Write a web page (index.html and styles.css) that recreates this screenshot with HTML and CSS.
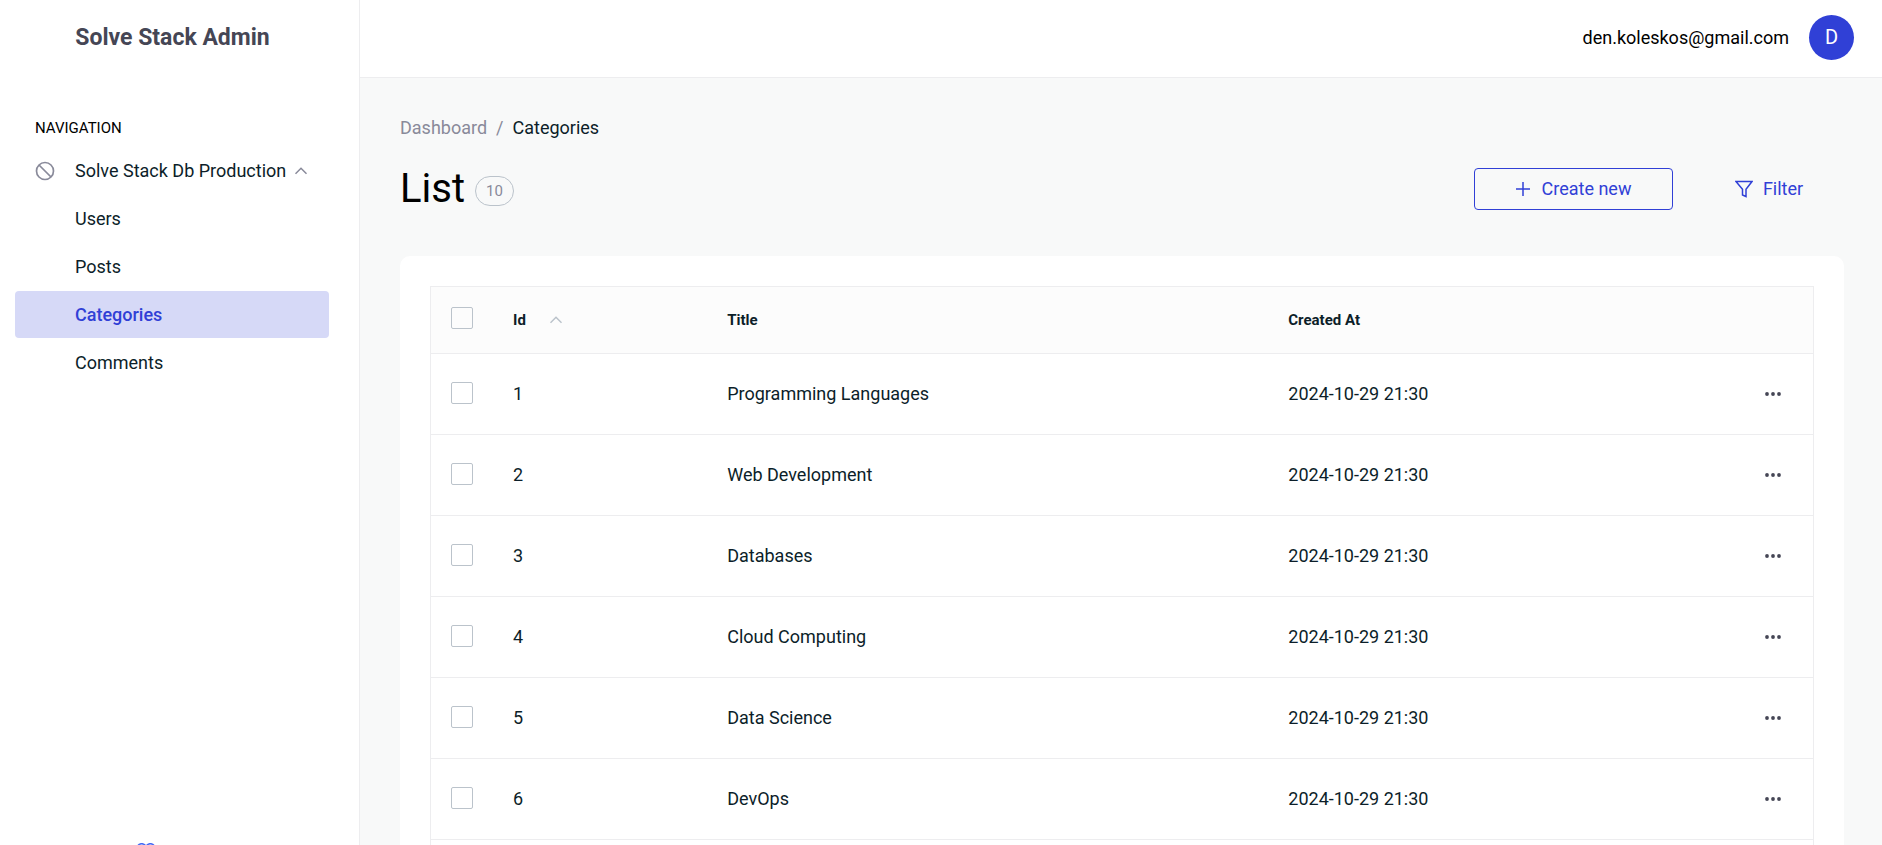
FILE: index.html
```html
<!DOCTYPE html>
<html lang="en">
<head>
<meta charset="utf-8">
<title>Solve Stack Admin</title>
<link rel="stylesheet" href="styles.css">
</head>
<body>
<svg class="sprite" aria-hidden="true">
  <symbol id="chevron-up" viewBox="0 0 14 8"><path d="M1.500 6.700 7 1.200l5.500 5.500" fill="none" stroke="currentColor" stroke-width="1.500"/></symbol>
  <symbol id="dots" viewBox="0 0 16 4"><circle cx="2" cy="2" r="1.900"/><circle cx="8" cy="2" r="1.900"/><circle cx="14" cy="2" r="1.900"/></symbol>
</svg>
<div class="app">
  <aside class="sidebar">
    <a class="brand" href="#">Solve Stack Admin</a>
    <nav class="nav" aria-label="Navigation">
      <div class="nav-title">NAVIGATION</div>
      <button class="nav-group" type="button" aria-expanded="true">
        <svg class="ban" viewBox="0 0 20 20"><circle cx="10" cy="10" r="8.500"/><path d="M4 4l12 12"/></svg>
        <span>Solve Stack Db Production</span>
        <svg class="chevron"><use href="#chevron-up"/></svg>
      </button>
      <a class="nav-item" href="#">Users</a>
      <a class="nav-item" href="#">Posts</a>
      <a class="nav-item active" href="#" aria-current="page">Categories</a>
      <a class="nav-item" href="#">Comments</a>
    </nav>
    <div class="credit">
      <svg class="heart" viewBox="0 0 18 16"><path d="M9 15 2 8C-1 4 1 .7 4.700.700 7 .700 8.200 2 9 3.200 9.800 2 11 .700 13.300.700 17 .700 19 4 16 8z"/></svg>
    </div>
  </aside>
  <div class="page">
    <header class="topbar">
      <span>den.koleskos@gmail.com</span>
      <span class="avatar">D</span>
    </header>
    <main class="main">
      <nav class="crumbs" aria-label="Breadcrumb">
        <a href="#">Dashboard</a><span class="slash">/</span><a class="current" href="#">Categories</a>
      </nav>
      <div class="heading">
        <h1>List</h1>
        <span class="badge">10</span>
        <div class="actions">
          <a class="btn create" href="#">
            <svg class="plus" viewBox="0 0 14 14"><path d="M7 0v14M0 7h14"/></svg>Create new
          </a>
          <button class="btn filter" type="button">
            <svg class="funnel" viewBox="0 0 18 18"><path d="M1 1.500h16L11 9.200V16.500L7.500 15V9.200z"/></svg>Filter
          </button>
        </div>
      </div>
      <section class="card">
        <table class="table">
          <colgroup><col class="c-check"><col class="c-id"><col class="c-title"><col><col class="c-menu"></colgroup>
          <thead>
            <tr>
              <th><input class="check" type="checkbox" aria-label="Select all"></th>
              <th><a class="sort" href="#">Id <svg class="chevron"><use href="#chevron-up"/></svg></a></th>
              <th>Title</th><th>Created At</th><th></th>
            </tr>
          </thead>
          <tbody>
            <tr><td><input class="check" type="checkbox" aria-label="Select 1"></td><td>1</td><td>Programming Languages</td><td>2024-10-29 21:30</td><td><button class="menu" type="button" aria-label="Actions"><svg><use href="#dots"/></svg></button></td></tr>
            <tr><td><input class="check" type="checkbox" aria-label="Select 2"></td><td>2</td><td>Web Development</td><td>2024-10-29 21:30</td><td><button class="menu" type="button" aria-label="Actions"><svg><use href="#dots"/></svg></button></td></tr>
            <tr><td><input class="check" type="checkbox" aria-label="Select 3"></td><td>3</td><td>Databases</td><td>2024-10-29 21:30</td><td><button class="menu" type="button" aria-label="Actions"><svg><use href="#dots"/></svg></button></td></tr>
            <tr><td><input class="check" type="checkbox" aria-label="Select 4"></td><td>4</td><td>Cloud Computing</td><td>2024-10-29 21:30</td><td><button class="menu" type="button" aria-label="Actions"><svg><use href="#dots"/></svg></button></td></tr>
            <tr><td><input class="check" type="checkbox" aria-label="Select 5"></td><td>5</td><td>Data Science</td><td>2024-10-29 21:30</td><td><button class="menu" type="button" aria-label="Actions"><svg><use href="#dots"/></svg></button></td></tr>
            <tr><td><input class="check" type="checkbox" aria-label="Select 6"></td><td>6</td><td>DevOps</td><td>2024-10-29 21:30</td><td><button class="menu" type="button" aria-label="Actions"><svg><use href="#dots"/></svg></button></td></tr>
            <tr><td></td><td></td><td></td><td></td><td></td></tr>
          </tbody>
        </table>
      </section>
    </main>
  </div>
</div>
</body>
</html>
```
FILE: styles.css
```css
:root {
  --primary: #3040d6;
  --primary-light: #d6d9f7;
  --text: #0c1e29;
  --muted: #898a9a;
  --line: #ededef;
  --control: #bbc3cb;
}

* { box-sizing: border-box; }

body {
  margin: 0;
  font: 18px/24px Roboto, sans-serif;
  color: var(--text);
}

a { color: inherit; text-decoration: none; }
button { font: inherit; color: inherit; background: none; border: 0; padding: 0; }
.sprite { display: none; }

.app { display: flex; height: 100vh; overflow: hidden; }

/* Sidebar */
.sidebar {
  flex: 0 0 360px;
  display: flex;
  flex-direction: column;
  overflow: hidden;
  background: #fff;
  border-right: 1px solid var(--line);
}
.brand {
  flex: none;
  padding: 21px 30px 23px 16px;
  font-size: 23px;
  line-height: 34px;
  font-weight: 700;
  text-align: center;
  color: #454655;
}
.nav {
  flex: none;
  display: flex;
  flex-direction: column;
  gap: 1px;
  min-height: calc(100vh - 80px);
  padding: 38px 30px 0 15px;
}
.nav-title {
  padding: 0 20px 6px;
  font-size: 15px;
  color: #000;
}
.nav-group {
  display: flex;
  align-items: center;
  height: 47px;
  padding: 0 0 0 20px;
  white-space: nowrap;
}
.ban { width: 20px; height: 20px; margin-right: 20px; fill: none; stroke: var(--muted); stroke-width: 1.7; }
.chevron { width: 14px; height: 8px; }
.nav-group .chevron { margin-left: 8px; color: var(--muted); }
.nav-item {
  display: flex;
  align-items: center;
  height: 47px;
  padding: 0 60px;
  border-radius: 4px;
}
.nav-item.active { background: var(--primary-light); color: var(--primary); font-weight: 500; }
.credit { flex: none; padding: 0 137px; }
.heart { display: block; width: 18px; height: 16px; fill: none; stroke: #4268f6; stroke-width: 1.5; }

/* Page */
.page { flex: 1; min-width: 0; background: #f8f9f9; }
.topbar {
  display: flex;
  align-items: center;
  justify-content: flex-end;
  gap: 20px;
  height: 78px;
  padding: 0 28px 2px 0;
  background: #fff;
  border-bottom: 1px solid var(--line);
  color: #000;
}
.avatar {
  width: 45px;
  height: 45px;
  border-radius: 50%;
  background: var(--primary);
  color: #fff;
  font-size: 20px;
  line-height: 45px;
  text-align: center;
}
.main { padding: 38px 38px 0 40px; }
.crumbs { color: var(--muted); }
.slash { margin: 0 9px; }
.current { color: var(--text); }
.heading { display: flex; align-items: center; height: 48px; margin: 25px 0 43px; }
h1 { margin: 0; font-size: 40px; line-height: 48px; font-weight: 400; color: #000; }
.badge {
  margin: 4px 0 0 10px;
  padding: 0 10px;
  border: 1px solid var(--control);
  border-radius: 15px;
  font-size: 15px;
  line-height: 28px;
  color: var(--muted);
}
.actions { display: flex; gap: 21px; margin-left: auto; }
.btn {
  display: flex;
  align-items: center;
  justify-content: center;
  height: 42px;
  color: var(--primary);
}
.btn svg { fill: none; stroke: currentColor; stroke-width: 1.5; }
.create { width: 199px; border: 1px solid var(--primary); border-radius: 4px; }
.filter { width: 150px; }
.plus { width: 14px; height: 14px; margin-right: 12px; }
.funnel { width: 18px; height: 18px; margin-right: 10px; }

/* Table */
.card { padding: 30px; background: #fff; border-radius: 10px; }
.table {
  width: 100%;
  table-layout: fixed;
  border-collapse: separate;
  border-spacing: 0;
  border: 1px solid var(--line);
}
.c-check { width: 62px; }
.c-id { width: 15.5%; }
.c-title { width: 40.6%; }
.c-menu { width: 68px; }
th, td {
  padding: 0 0 0 20px;
  text-align: left;
  vertical-align: middle;
  border-bottom: 1px solid var(--line);
}
th { height: 67px; background: #fcfcfc; font-size: 15px; font-weight: 700; }
td { height: 81px; }
.sort { display: flex; align-items: center; }
.sort .chevron { margin-left: 23px; color: var(--control); }
.check {
  appearance: none;
  display: block;
  width: 22px;
  height: 22px;
  margin: 0 0 2px;
  border: 1px solid var(--control);
  border-radius: 2px;
}
th .check { margin-bottom: 4px; }
.check:checked { background: var(--primary); }
.menu { display: block; padding: 10px 0; }
.menu svg { display: block; width: 16px; height: 4px; fill: #454655; }
```
